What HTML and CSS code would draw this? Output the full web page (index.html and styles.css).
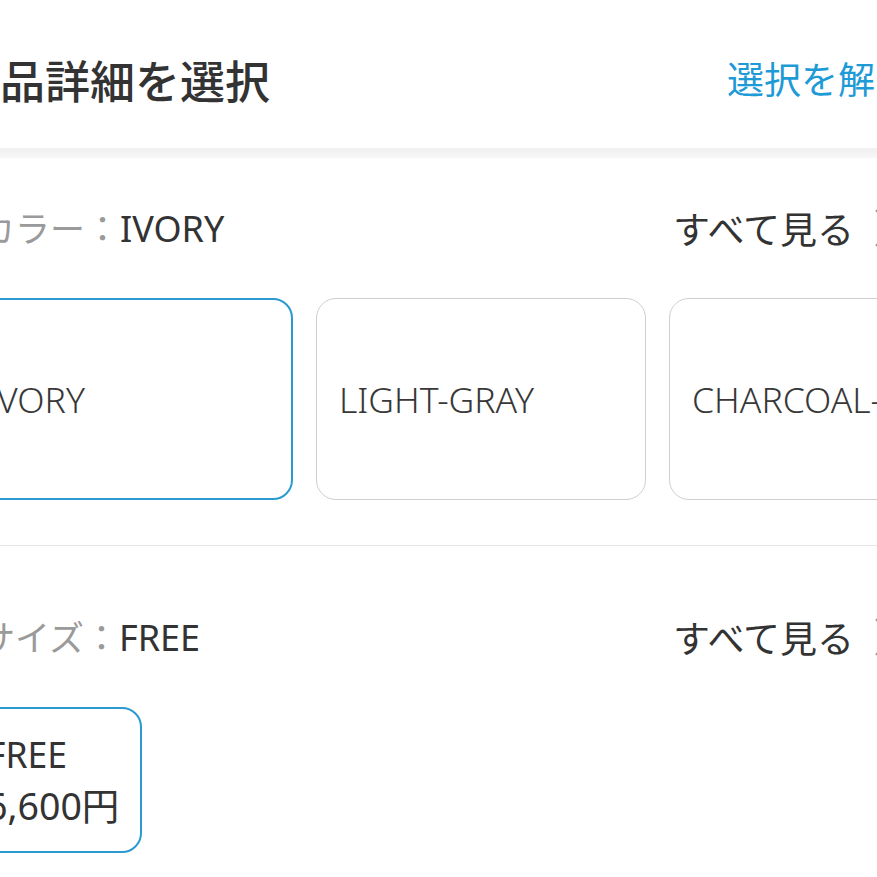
FILE: index.html
```html
<!DOCTYPE html>
<html lang="ja">
<head>
<meta charset="utf-8">
<link rel="stylesheet" href="styles.css">
</head>
<body>
<div class="page">
  <header class="header">
    <h1 class="title">商品詳細を選択</h1>
    <a class="clear">選択を解除</a>
  </header>
  <div class="band"></div>
  <section class="section">
    <div class="row">
      <div class="label"><span class="key">カラー：</span><span class="val">IVORY</span></div>
      <div class="more">すべて見る<svg class="chev" width="16" height="40" viewBox="0 0 16 40"><path d="M1 2 L14 20 L1 38" fill="none" stroke="#999" stroke-width="2"/></svg></div>
    </div>
    <div class="cards">
      <div class="card selected">IVORY</div>
      <div class="card">LIGHT-GRAY</div>
      <div class="card">CHARCOAL-GRAY</div>
    </div>
  </section>
  <div class="divider"></div>
  <section class="section size">
    <div class="row">
      <div class="label"><span class="key">サイズ：</span><span class="val">FREE</span></div>
      <div class="more">すべて見る<svg class="chev" width="16" height="40" viewBox="0 0 16 40"><path d="M1 2 L14 20 L1 38" fill="none" stroke="#999" stroke-width="2"/></svg></div>
    </div>
    <div class="cards">
      <div class="size-card selected">
        <div class="line">FREE</div>
        <div class="line price">6,600円</div>
      </div>
    </div>
  </section>
</div>
</body>
</html>
```

FILE: styles.css
```css
html, body {
  margin: 0;
  padding: 0;
  background: #fff;
  overflow: hidden;
}
body {
  width: 877px;
  height: 877px;
  font-family: "Noto Sans", "Noto Sans CJK JP", sans-serif;
  color: #333;
}
.page {
  width: 960px;
  margin-left: -37px;
}
.header {
  height: 148px;
  display: flex;
  align-items: center;
  justify-content: space-between;
  padding-right: 11px;
  padding-top: 12px;
  box-sizing: border-box;
}
.title {
  margin: 0 0 0 -8px;
  font-family: "Noto Sans CJK JP", sans-serif;
  font-size: 45px;
  font-weight: 500;
  color: #333;
  line-height: 60px;
}
.clear {
  font-family: "Noto Sans CJK JP", sans-serif;
  font-size: 37px;
  color: #1e9ad6;
  line-height: 50px;
  margin-top: -4px;
}
.band {
  height: 10px;
  background: linear-gradient(#f0f0f0, #f7f7f7);
}
.section {
  padding-top: 45px;
}
.size {
  padding-top: 66px;
}
.row {
  display: flex;
  justify-content: space-between;
  align-items: center;
  height: 50px;
  padding-right: 32px;
}
.label {
  font-size: 35px;
  line-height: 50px;
  margin-left: 17px;
}
.key {
  font-family: "Noto Sans CJK JP", sans-serif;
  color: #9a9a9a;
}
.val {
  color: #333;
  font-size: 36px;
}
.more {
  display: flex;
  align-items: center;
  gap: 21px;
  font-family: "Noto Sans CJK JP", sans-serif;
  font-size: 37px;
  line-height: 50px;
  color: #333;
}
.chev {
  display: block;
}
.cards {
  display: flex;
  gap: 23px;
  margin-top: 45px;
}
.card {
  flex: 0 0 auto;
  width: 330px;
  height: 202px;
  box-sizing: border-box;
  border: 1px solid #cfcfcf;
  border-radius: 20px;
  display: flex;
  align-items: center;
  padding-left: 22px;
  font-size: 35.5px;
  font-weight: 300;
  color: #383838;
  white-space: nowrap;
  overflow: hidden;
}
.card.selected {
  border: 2.5px solid #2a9ad0;
  padding-left: 21px;
}
.size-card {
  width: 179px;
  height: 146px;
  box-sizing: border-box;
  border: 2.5px solid #2a9ad0;
  border-radius: 20px;
  padding: 19px 0 0 22px;
  font-size: 35.5px;
}
.line {
  line-height: 52px;
  white-space: nowrap;
}
.price {
  font-size: 37.5px;
  margin-left: -1px;
}
.divider {
  height: 1px;
  background: #e6e6e6;
  margin-top: 45px;
}
```
